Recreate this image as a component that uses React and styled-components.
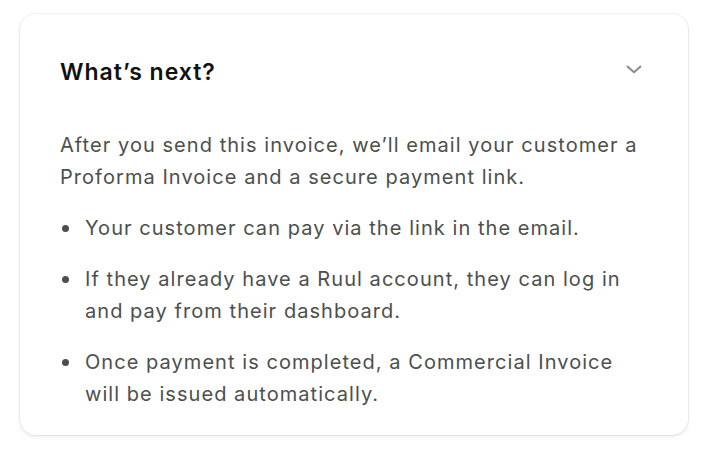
import React from "react";
import styled, { createGlobalStyle } from "styled-components";

const Global = createGlobalStyle`
  html, body { margin: 0; padding: 0; background: #ffffff; }
  body { font-family: Inter, "Noto Sans", sans-serif; -webkit-font-smoothing: antialiased; }
`;

const Page = styled.div`
  padding: 14px 14px 16px 20px;
  width: 702px;
  box-sizing: border-box;
`;

const Card = styled.section`
  width: 668px;
  box-sizing: border-box;
  background: #fff;
  border-radius: 16px;
  box-shadow: 0 0 0 1px rgba(0,0,0,0.05), 0 2px 4px rgba(0,0,0,0.08);
  padding: 44px 40px 25px 40px;
`;

const Header = styled.div`
  display: flex;
  align-items: center;
  justify-content: space-between;
  height: 28px;
`;

const Title = styled.h2`
  margin: 0;
  font-size: 23px;
  font-weight: 600;
  color: #111;
  letter-spacing: 1px;
`;

const Toggle = styled.button`
  border: 0;
  background: none;
  padding: 0;
  margin: 0 6px 6px 0;
  display: flex;
  color: #8a8d8a;
`;

const Body = styled.div`
  margin-top: 43px;
  font-size: 20px;
  line-height: 32px;
  letter-spacing: 1.05px;
  color: #4b504c;
`;

const Para = styled.p`
  margin: 0 0 19px 0;
`;

const List = styled.ul`
  margin: 0;
  padding: 0;
  list-style: none;
  display: flex;
  flex-direction: column;
  gap: 19px;
`;

const Item = styled.li`
  position: relative;
  padding-left: 25px;
  &::before {
    content: "";
    position: absolute;
    left: 2px;
    top: 13px;
    width: 7px;
    height: 7px;
    border-radius: 50%;
    background: #4b504c;
  }
`;

export default function App() {
  return (
    <Page>
      <Global />
      <Card>
        <Header>
          <Title>What’s next?</Title>
          <Toggle aria-label="Collapse">
            <svg width="16" height="9" viewBox="0 0 16 9" fill="none">
              <path d="M1.5 1.5 L8 7.2 L14.5 1.5" stroke="currentColor" strokeWidth="2" strokeLinecap="round" strokeLinejoin="round" />
            </svg>
          </Toggle>
        </Header>
        <Body>
          <Para>After you send this invoice, we’ll email your customer a Proforma Invoice and a secure payment link.</Para>
          <List>
            <Item>Your customer can pay via the link in the email.</Item>
            <Item>If they already have a Ruul account, they can log in and pay from their dashboard.</Item>
            <Item>Once payment is completed, a Commercial Invoice will be issued automatically.</Item>
          </List>
        </Body>
      </Card>
    </Page>
  );
}
